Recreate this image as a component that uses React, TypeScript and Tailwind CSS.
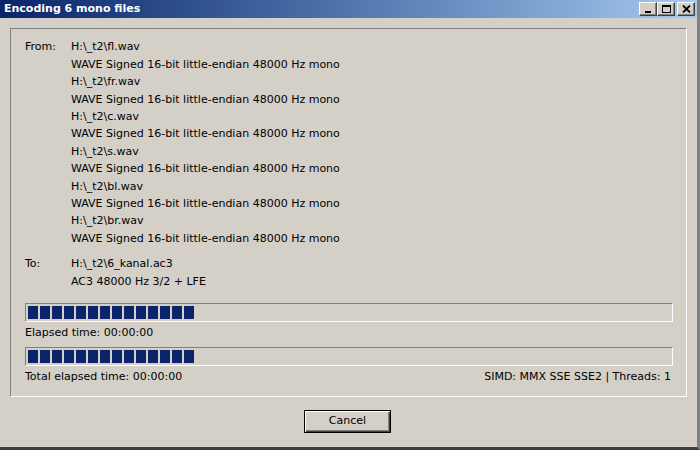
const files = ["fl", "fr", "c", "s", "bl", "br"];

function TitleButton({ children }: { children: React.ReactNode }) {
  return (
    <div className="flex h-[14px] w-[18px] items-center justify-center border border-t-white border-l-white border-r-[#404040] border-b-[#404040] bg-[#d4d0c8] shadow-[inset_-1px_-1px_0_#808080]">
      {children}
    </div>
  );
}

function Progress() {
  return (
    <div className="flex h-[19px] w-[648px] items-center gap-[2px] border border-t-[#808080] border-l-[#808080] border-r-white border-b-white px-[2px]">
      {Array.from({ length: 14 }).map((_, i) => (
        <div key={i} className="h-[13px] w-[10px] bg-[#0a246a]" />
      ))}
    </div>
  );
}

export default function App() {
  return (
    <div className="flex h-[450px] w-[700px] flex-col overflow-hidden border-r-[3px] border-b-[3px] border-r-[#808080] border-b-[#404040] bg-[#d4d0c8] font-['DejaVu_Sans',sans-serif] text-[11px] text-black">
      <div className="flex h-[18px] shrink-0 items-center justify-between bg-gradient-to-r from-[#0a246a] to-[#a6caf0] pl-[4px] pr-[2px]">
        <span className="text-[11px] font-bold text-white">Encoding 6 mono files</span>
        <div className="flex items-center">
          <TitleButton>
            <div className="mt-[6px] h-[2px] w-[6px] bg-black" />
          </TitleButton>
          <TitleButton>
            <div className="h-[8px] w-[9px] border border-t-2 border-black" />
          </TitleButton>
          <div className="w-[2px]" />
          <TitleButton>
            <svg width="9" height="8" viewBox="0 0 9 8">
              <path d="M1 0.5 L8 7.5 M8 0.5 L1 7.5" stroke="black" strokeWidth="1.8" />
            </svg>
          </TitleButton>
        </div>
      </div>

      <div className="px-[10px] pt-[10px]">
        <div className="flex h-[369px] flex-col border border-t-[#808080] border-l-[#808080] border-r-white border-b-white pl-[14px] pt-[10px]">
          <div className="flex">
            <div className="flex h-[17.4px] w-[46px] items-center">From:</div>
            <div className="flex flex-col">
              {files.map((f) => (
                <div key={f}>
                  <div className="flex h-[17.4px] items-center">H:\_t2\{f}.wav</div>
                  <div className="flex h-[17.4px] items-center">
                    WAVE Signed 16-bit little-endian 48000 Hz mono
                  </div>
                </div>
              ))}
            </div>
          </div>
          <div className="mt-[8px] flex">
            <div className="flex h-[17.4px] w-[46px] items-center">To:</div>
            <div className="flex flex-col">
              <div className="flex h-[17.4px] items-center">H:\_t2\6_kanal.ac3</div>
              <div className="flex h-[17.4px] items-center">AC3 48000 Hz 3/2 + LFE</div>
            </div>
          </div>
          <div className="mt-[13px]">
            <Progress />
          </div>
          <div className="flex h-[22px] items-center">Elapsed time: 00:00:00</div>
          <div className="mt-[3px]">
            <Progress />
          </div>
          <div className="flex h-[21px] w-[648px] items-center justify-between pr-[2px]">
            <span>Total elapsed time: 00:00:00</span>
            <span>SIMD: MMX SSE SSE2 | Threads: 1</span>
          </div>
        </div>
      </div>

      <div className="flex justify-center pt-[13px] pr-[2px]">
        <button className="h-[23px] w-[87px] border border-black bg-[#d4d0c8] text-[11px] shadow-[inset_1px_1px_0_white,inset_-1px_-1px_0_#404040,inset_-2px_-2px_0_#808080]">
          Cancel
        </button>
      </div>
    </div>
  );
}
